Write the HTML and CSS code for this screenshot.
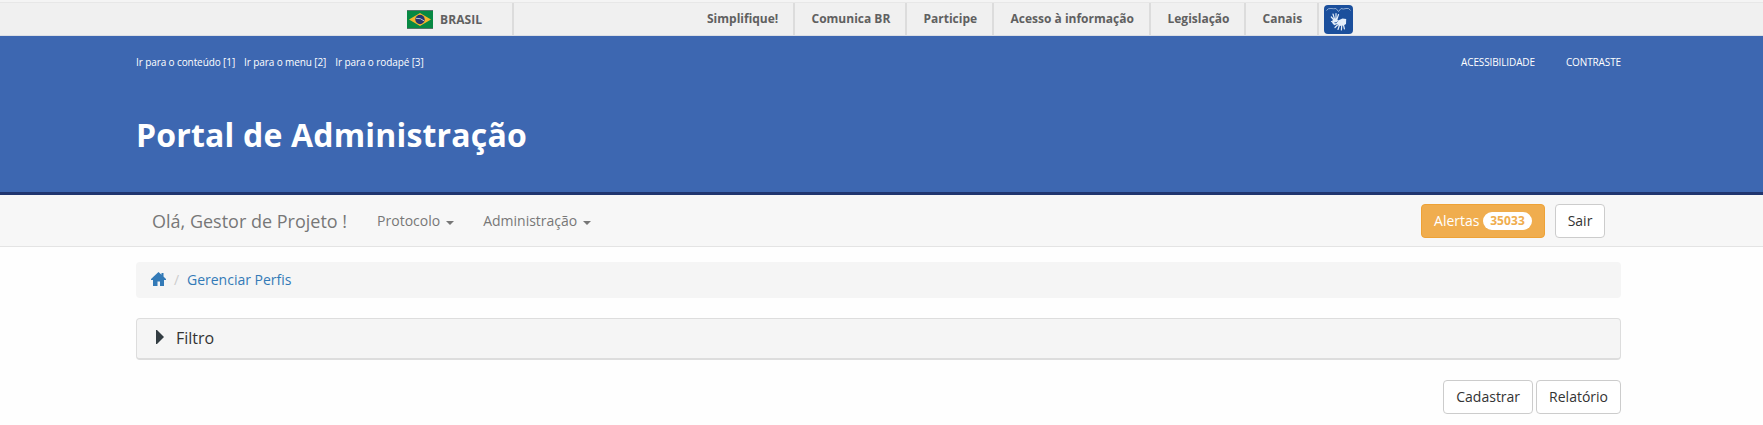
FILE: index.html
```html
<!DOCTYPE html>
<html lang="pt-BR">
<head>
<meta charset="utf-8">
<title>Portal de Administração</title>
<link rel="stylesheet" href="styles.css">
</head>
<body>
<div class="gov-bar">
  <a class="gov-brand">
    <svg class="flag" viewBox="0 0 26 19"><path fill="#078943" d="M0 0h26v19H0z"/><path fill="#57746a" d="M0 0h26v1H0zM0 18h26v1H0z"/><path fill="#f6b52b" d="M13 3l11 6.500L13 16 2 9.500z"/><circle cx="13" cy="9.500" r="4.700" fill="#28356f"/><path d="M9 8.300q4.500-.5 8 2.500" fill="none" stroke="#b9bfd0" stroke-width="1"/></svg>
    <span>BRASIL</span>
  </a>
  <ul class="gov-links">
    <li class="w-simp">Simplifique!</li>
    <li class="w-com">Comunica BR</li>
    <li class="w-part">Participe</li>
    <li class="w-acesso">Acesso à informação</li>
    <li class="w-leg">Legislação</li>
    <li class="w-can">Canais</li>
  </ul>
  <svg class="libras" viewBox="0 0 29 29"><rect width="29" height="29" rx="4" fill="#1b4f9c"/><path d="M2.500 5.500Q4 3 7 3.500T12 3.500L14.500 6.500 17 3.500Q19 4.500 22 3.500T26.500 5.500" fill="none" stroke="#8fabd3" stroke-width="1"/><g fill="none" stroke="#e4eefa" stroke-linecap="round"><path stroke-width="1.200" d="M10.500 14L9 9M12 14V8.500M13 14l1.500-4.500M10 15l-2.700-3M10 17.500l-2.500-1"/><path stroke-width="1.200" d="M15.500 20L14 24.500M17.700 20.500l-.3 4.500M19.500 20l.9 3.800M13.500 20l-2.500 2.500"/></g><path fill="#e4eefa" d="M8.500 15l4-2 1.500 2.500 4.500-2 3.700.6-.2 5-2.500 1.500-4.500.5-1.500-2-3.300 1.200-2-2.200z"/><path d="M10.500 17.700q2 .8 3-1.200" fill="none" stroke="#1b4f9c" stroke-width=".9"/></svg>
</div>
<header class="header">
  <div class="container">
    <div class="top-links">
      <div class="skip"><a>Ir para o conteúdo [1]</a><a>Ir para o menu [2]</a><a>Ir para o rodapé [3]</a></div>
      <div class="access"><a>ACESSIBILIDADE</a><a>CONTRASTE</a></div>
    </div>
    <h1>Portal de Administração</h1>
  </div>
</header>
<nav class="navbar">
  <div class="container nav-inner">
    <span class="greeting">Olá, Gestor de Projeto !</span>
    <a class="nav-item">Protocolo<b class="caret"></b></a>
    <a class="nav-item">Administração<b class="caret"></b></a>
    <div class="nav-actions">
      <button class="btn warning">Alertas <span class="badge">35033</span></button>
      <button class="btn exit">Sair</button>
    </div>
  </div>
</nav>
<main class="container">
  <div class="breadcrumb">
    <svg class="home" viewBox="0 0 15 14"><path fill="#337ab7" d="M7.500 0L10.500 2.700V1H12.500v3.600L15 7v1h-2v6H9V9.500H6.500V14H2V8H0V7z"/></svg>
    <span class="slash">/</span><a>Gerenciar Perfis</a>
  </div>
  <section class="panel"><svg class="arrow" viewBox="0 0 8 14"><path fill="#333d42" d="M0 0h1l7 7-7 7H0z"/></svg><span class="panel-title">Filtro</span></section>
  <div class="actions"><button class="btn">Cadastrar</button><button class="btn">Relatório</button></div>
</main>
</body>
</html>
```
FILE: styles.css
```css
* { box-sizing: border-box; }
body {
  margin: 0;
  background: #fefefe;
  color: #333;
  font: 14px/20px "Open Sans", "Noto Sans", sans-serif;
  white-space: nowrap;
}
.container { width: 1485px; margin-left: 136px; }
.gov-bar {
  display: flex;
  height: 36px;
  padding: 3px 0 0 407px;
  background: linear-gradient(#f4f4f4 2px, #e7e7e7 2px, #e7e7e7 3px, #f0f0f0 3px);
  border-bottom: 1px solid #dcdfe5;
  color: #606060;
  font-size: 12px;
  font-weight: 700;
}
.gov-brand {
  display: flex;
  width: 107px;
  padding-top: 7px;
  border-right: 2px solid #dcdcdc;
}
.flag { width: 26px; height: 19px; margin-right: 7px; }
.gov-brand span { line-height: 19px; letter-spacing: .1px; }
.gov-links { display: flex; margin: 0 0 0 176px; padding: 0; list-style: none; }
.gov-links li { padding: 6px 0 0 16.5px; border-right: 2px solid #dcdcdc; }
.gov-links .w-simp { width: 105px; padding-left: 17px; }
.w-com { width: 112px; }
.w-part { width: 87px; }
.w-acesso { width: 157px; }
.w-leg { width: 95px; }
.w-can { width: 73px; }
.libras { width: 29px; height: 29px; margin: 2px 0 0 5px; }
.header { height: 159px; background: #3d67b1; border-bottom: 3px solid #20356f; color: #fff; }
.top-links { display: flex; justify-content: space-between; padding-top: 16px; font-size: 10px; letter-spacing: -.1px; }
.skip { display: flex; gap: 9px; }
.access { display: flex; gap: 31px; letter-spacing: -.12px; }
h1 { margin: 41px 0 0; font-size: 32px; line-height: 44px; letter-spacing: .18px; }
.navbar { height: 52px; background: #f7f7f7; border-bottom: 1px solid #e4e4e4; color: #777; }
.nav-inner { display: flex; padding: 9px 16px 0; }
.greeting { margin-right: 30px; font-size: 18px; line-height: 35px; }
.nav-item { display: flex; align-items: center; height: 34px; margin-right: 29px; }
.caret { margin: 3px 0 0 6px; border: 4px solid transparent; border-top-color: #777; border-bottom: 0; }
.nav-actions { display: flex; gap: 10px; margin-left: auto; }
.btn {
  height: 34px;
  padding: 0 12px;
  border: 1px solid #ccc;
  border-radius: 4px;
  background: #fff;
  color: #333;
  font: inherit;
}
.warning { width: 124px; padding: 0; background: #f0ad4e; border-color: #eea236; color: #fff; }
.exit { width: 50px; padding: 0; }
.badge {
  display: inline-block;
  padding: 3px 7px;
  border-radius: 10px;
  background: #fff;
  color: #f0ad4e;
  font-size: 12px;
  font-weight: 700;
  line-height: 12px;
  letter-spacing: .1px;
  vertical-align: 1px;
}
.breadcrumb {
  display: flex;
  align-items: center;
  height: 36px;
  margin-top: 15px;
  padding-left: 15px;
  border-radius: 4px;
  background: #f5f5f5;
  color: #337ab7;
}
.home { width: 15px; height: 14px; margin-top: -3px; }
.slash { width: 21px; padding-left: 8px; color: #ccc; }
.panel {
  display: flex;
  align-items: center;
  height: 42px;
  margin-top: 20px;
  padding-left: 19px;
  border: 1px solid #ddd;
  border-bottom-width: 2px;
  border-radius: 4px;
  background: #f5f5f5;
  font-size: 16px;
}
.arrow { width: 8px; height: 14px; margin: -3px 12px 0 0; }
.panel-title { margin-top: -1px; }
.actions { display: flex; justify-content: flex-end; gap: 3px; margin-top: 20px; }
```
